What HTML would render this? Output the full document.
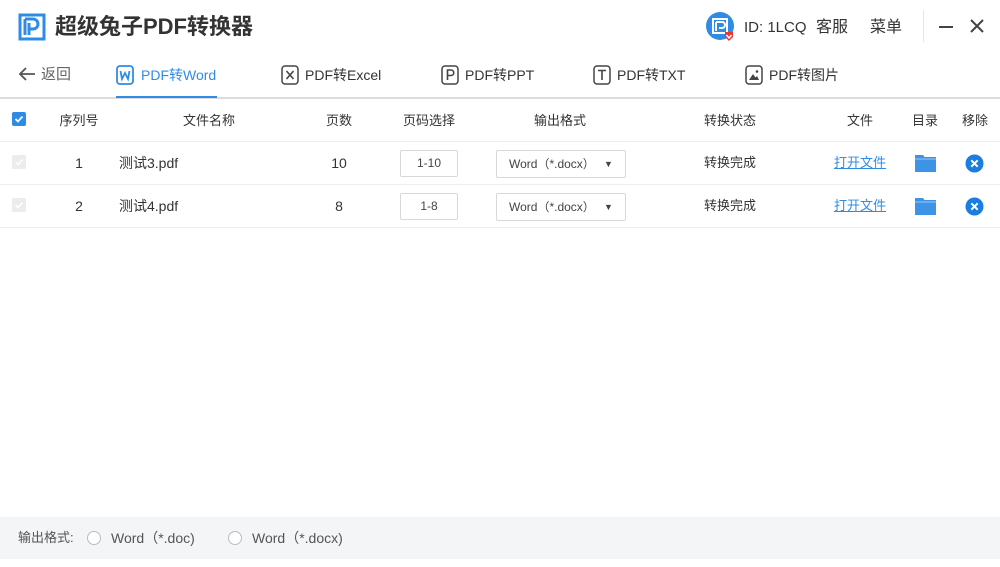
<!DOCTYPE html>
<html><head><meta charset="utf-8"><style>
*{margin:0;padding:0;box-sizing:border-box}
body{width:1000px;height:567px;background:#fff;font-family:"Liberation Sans","Noto Sans CJK SC",sans-serif;color:#333;position:relative;overflow:hidden}
.a{position:absolute;white-space:nowrap}
.l{line-height:16px}
.t{font-size:13px;color:#333;line-height:16px}
.c{transform:translateX(-50%)}
.inp{position:absolute;border:1px solid #d8d8d8;border-radius:2px;background:#fff;font-size:12px;color:#444;text-align:center}
.sep{position:absolute;left:0;width:1000px;height:1px;background:#eeeeee}
.chk{position:absolute;left:12px;width:14px;height:14px;border-radius:2px;background:#ececec}
</style></head><body>
<svg class="a" style="left:18px;top:13px" width="28" height="28" viewBox="0 0 28 28"><path d="M2 2H26V26H2Z" fill="none" stroke="#2f8ce5" stroke-width="3"/><path d="M7 6V22M7 6H15A5 5 0 0 1 15 16H11M11 10V22" fill="none" stroke="#2f8ce5" stroke-width="3"/></svg>
<div class="a" style="left:55px;top:13px;font-size:22px;line-height:28px;font-weight:bold;color:#333">超级兔子PDF转换器</div>
<svg class="a" style="left:705px;top:11px" width="34" height="34" viewBox="0 0 34 34"><circle cx="15" cy="15" r="14" fill="#2f8ce5"/><path d="M8 8H22V22H8Z M11 11V20M11 11H17A3 3 0 0 1 17 17H14" fill="none" stroke="#fff" stroke-width="2"/><path d="M20 21L28 21L28 26L24 30L20 26Z" fill="#e53935"/><path d="M21.5 24L24 27L26.5 24" fill="none" stroke="#fff" stroke-width="1.5"/></svg>
<div class="a" style="left:744px;top:18px;font-size:15px;line-height:20px;color:#333">ID: 1LCQ</div>
<div class="a" style="left:816px;top:18px;font-size:16px;line-height:20px;color:#333">客服</div>
<div class="a" style="left:870px;top:18px;font-size:16px;line-height:20px;color:#333">菜单</div>
<div class="a" style="left:923px;top:10px;width:1px;height:32px;background:#e6e6e6"></div>
<div class="a" style="left:939px;top:26px;width:14px;height:2px;background:#444"></div>
<svg class="a" style="left:969px;top:18px" width="16" height="16" viewBox="0 0 16 16"><path d="M2 2L14 14M14 2L2 14" stroke="#444" stroke-width="2"/></svg>
<svg class="a" style="left:18px;top:67px" width="18" height="14" viewBox="0 0 18 14"><path d="M17 7H2M8 1L2 7L8 13" fill="none" stroke="#555" stroke-width="1.8"/></svg>
<div class="a l" style="left:41px;top:67px;font-size:15px;color:#666">返回</div>
<svg class="a" style="left:116px;top:65px" width="18" height="20" viewBox="0 0 18 20"><rect x="1" y="1" width="16" height="18" rx="3" fill="none" stroke="#2f8ce5" stroke-width="1.8"/><path d="M4.5 6L6 14L9 8L12 14L13.5 6" fill="none" stroke="#2f8ce5" stroke-width="1.8"/></svg>
<div class="a l" style="left:141px;top:67px;font-size:14px;color:#2f8ce5">PDF转Word</div>
<div class="a" style="left:116px;top:96px;width:101px;height:2px;background:#2f8ce5;z-index:2"></div>
<svg class="a" style="left:281px;top:65px" width="18" height="20" viewBox="0 0 18 20"><rect x="1" y="1" width="16" height="18" rx="3" fill="none" stroke="#444" stroke-width="1.5"/><path d="M5.5 6L12.5 14M12.5 6L5.5 14" stroke="#444" stroke-width="1.6"/></svg>
<div class="a l" style="left:305px;top:67px;font-size:14px;color:#333">PDF转Excel</div>
<svg class="a" style="left:441px;top:65px" width="18" height="20" viewBox="0 0 18 20"><rect x="1" y="1" width="16" height="18" rx="3" fill="none" stroke="#444" stroke-width="1.5"/><path d="M6.5 15V5H10A2.7 2.7 0 0 1 10 10.5H6.5" fill="none" stroke="#444" stroke-width="1.6"/></svg>
<div class="a l" style="left:465px;top:67px;font-size:14px;color:#333">PDF转PPT</div>
<svg class="a" style="left:593px;top:65px" width="18" height="20" viewBox="0 0 18 20"><rect x="1" y="1" width="16" height="18" rx="3" fill="none" stroke="#444" stroke-width="1.5"/><path d="M5 5.5H13M9 5.5V15" fill="none" stroke="#444" stroke-width="1.6"/></svg>
<div class="a l" style="left:617px;top:67px;font-size:14px;color:#333">PDF转TXT</div>
<svg class="a" style="left:745px;top:65px" width="18" height="20" viewBox="0 0 18 20"><rect x="1" y="1" width="16" height="18" rx="3" fill="none" stroke="#444" stroke-width="1.5"/><path d="M4 15L8 9L10.5 12.5L12 11L14 15Z" fill="#444"/><circle cx="12" cy="6.5" r="1.3" fill="#444"/></svg>
<div class="a l" style="left:769px;top:67px;font-size:14px;color:#333">PDF转图片</div>
<div class="a" style="left:0;top:97px;width:1000px;height:2px;background:#dcdcdc"></div>
<div class="a" style="left:12px;top:112px;width:14px;height:14px;background:#2f8ce5;border-radius:2px"></div>
<svg class="a" style="left:12px;top:112px" width="14" height="14"><path d="M3.5 7L6 9.5L10.5 4.5" fill="none" stroke="#fff" stroke-width="1.8"/></svg>
<div class="a t c" style="left:79px;top:113px">序列号</div>
<div class="a t c" style="left:209px;top:113px">文件名称</div>
<div class="a t c" style="left:339px;top:113px">页数</div>
<div class="a t c" style="left:429px;top:113px">页码选择</div>
<div class="a t c" style="left:560px;top:113px">输出格式</div>
<div class="a t c" style="left:730px;top:113px">转换状态</div>
<div class="a t c" style="left:860px;top:113px">文件</div>
<div class="a t c" style="left:925px;top:113px">目录</div>
<div class="a t c" style="left:975px;top:113px">移除</div>
<div class="sep" style="top:141px"></div>
<div class="chk" style="top:155px"></div>
<svg class="a" style="left:12px;top:155px" width="14" height="14"><path d="M3.5 7L6 9.5L10.5 4.5" fill="none" stroke="#fff" stroke-width="1.5"/></svg>
<div class="a t c" style="left:79px;top:155px;font-size:14px">1</div>
<div class="a t" style="left:119px;top:155px;font-size:14px">测试3.pdf</div>
<div class="a t c" style="left:339px;top:155px;font-size:14px">10</div>
<div class="inp" style="left:400px;top:150px;width:58px;height:27px;line-height:25px">1-10</div>
<div class="inp" style="left:496px;top:150px;width:130px;height:28px;line-height:26px;text-align:left;padding-left:12px">Word（*.docx）<span style="position:absolute;left:107px;top:0;font-size:9px">▼</span></div>
<div class="a t c" style="left:730px;top:155px">转换完成</div>
<div class="a c" style="left:860px;top:155px;font-size:13px;line-height:16px;color:#2f8ce5;text-decoration:underline">打开文件</div>
<svg class="a" style="left:915px;top:154px" width="21" height="18" viewBox="0 0 21 18"><path d="M0 1H8L9.5 3H21V18H0Z" fill="#3d93e6"/><rect x="0" y="4.5" width="21" height="1" fill="#fff" opacity=".5"/></svg>
<svg class="a" style="left:965px;top:154px" width="19" height="19" viewBox="0 0 19 19"><circle cx="9.5" cy="9.5" r="9" fill="#1a7de0"/><path d="M6.3 6.3L12.7 12.7M12.7 6.3L6.3 12.7" stroke="#fff" stroke-width="2"/></svg>
<div class="sep" style="top:184px"></div>
<div class="chk" style="top:198px"></div>
<svg class="a" style="left:12px;top:198px" width="14" height="14"><path d="M3.5 7L6 9.5L10.5 4.5" fill="none" stroke="#fff" stroke-width="1.5"/></svg>
<div class="a t c" style="left:79px;top:198px;font-size:14px">2</div>
<div class="a t" style="left:119px;top:198px;font-size:14px">测试4.pdf</div>
<div class="a t c" style="left:339px;top:198px;font-size:14px">8</div>
<div class="inp" style="left:400px;top:193px;width:58px;height:27px;line-height:25px">1-8</div>
<div class="inp" style="left:496px;top:193px;width:130px;height:28px;line-height:26px;text-align:left;padding-left:12px">Word（*.docx）<span style="position:absolute;left:107px;top:0;font-size:9px">▼</span></div>
<div class="a t c" style="left:730px;top:198px">转换完成</div>
<div class="a c" style="left:860px;top:198px;font-size:13px;line-height:16px;color:#2f8ce5;text-decoration:underline">打开文件</div>
<svg class="a" style="left:915px;top:197px" width="21" height="18" viewBox="0 0 21 18"><path d="M0 1H8L9.5 3H21V18H0Z" fill="#3d93e6"/><rect x="0" y="4.5" width="21" height="1" fill="#fff" opacity=".5"/></svg>
<svg class="a" style="left:965px;top:197px" width="19" height="19" viewBox="0 0 19 19"><circle cx="9.5" cy="9.5" r="9" fill="#1a7de0"/><path d="M6.3 6.3L12.7 12.7M12.7 6.3L6.3 12.7" stroke="#fff" stroke-width="2"/></svg>
<div class="sep" style="top:227px"></div>
<div class="a" style="left:0;top:517px;width:1000px;height:42px;background:#f4f5f7"></div>
<div class="a l" style="left:18px;top:530px;font-size:13px;color:#555">输出格式:</div>
<div class="a" style="left:87px;top:531px;width:14px;height:14px;border:1px solid #bbb;border-radius:50%;background:#fff"></div>
<div class="a l" style="left:111px;top:530px;font-size:14px;color:#555">Word（*.doc)</div>
<div class="a" style="left:228px;top:531px;width:14px;height:14px;border:1px solid #bbb;border-radius:50%;background:#fff"></div>
<div class="a l" style="left:252px;top:530px;font-size:14px;color:#555">Word（*.docx)</div>
</body></html>
